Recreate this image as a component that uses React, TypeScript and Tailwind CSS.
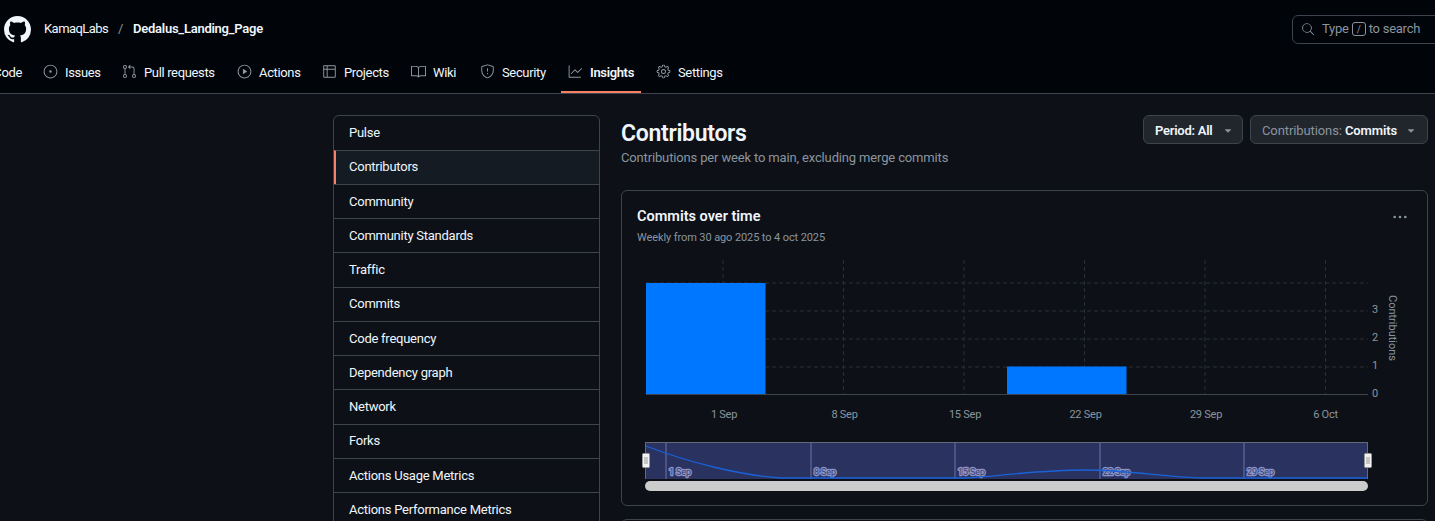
import { GoBook, GoGear, GoGitPullRequest, GoGraph, GoIssueOpened, GoKebabHorizontal, GoPlay, GoSearch, GoShield, GoTable, GoTriangleDown } from 'react-icons/go'

const navItems = [
  { label: 'Issues', icon: GoIssueOpened, w: 'w-[71px]' },
  { label: 'Pull requests', icon: GoGitPullRequest, w: 'w-[107px]' },
  { label: 'Actions', icon: GoPlay, w: 'w-[77px]' },
  { label: 'Projects', icon: GoTable, w: 'w-[81px]' },
  { label: 'Wiki', icon: GoBook, w: 'w-[61px]' },
  { label: 'Security', icon: GoShield, w: 'w-[80px]' },
  { label: 'Insights', icon: GoGraph, w: 'w-[80px]', active: true },
  { label: 'Settings', icon: GoGear, w: 'w-[83px]' },
]

const sideItems = ['Pulse', 'Contributors', 'Community', 'Community Standards', 'Traffic', 'Commits', 'Code frequency', 'Dependency graph', 'Network', 'Forks', 'Actions Usage Metrics', 'Actions Performance Metrics']

const vGrid = [723, 843.5, 964, 1084.5, 1205, 1325.5]
const xLabels = ['1 Sep', '8 Sep', '15 Sep', '22 Sep', '29 Sep', '6 Oct']
const navTicks = [
  { x: 666, label: '1 Sep' },
  { x: 811, label: '8 Sep' },
  { x: 955, label: '15 Sep' },
  { x: 1100, label: '22 Sep' },
  { x: 1244, label: '29 Sep' },
]

const GithubMark = () => {
  return (
    <svg viewBox="0 0 16 16" className="w-[27px] h-[27px]" fill="#f0f6fc">
      <path d="M8 0c4.42 0 8 3.58 8 8a8.013 8.013 0 0 1-5.45 7.59c-.4.08-.55-.17-.55-.38 0-.27.01-1.13.01-2.2 0-.75-.25-1.23-.54-1.48 1.78-.2 3.65-.88 3.65-3.95 0-.88-.31-1.59-.82-2.15.08-.2.36-1.02-.08-2.12 0 0-.67-.22-2.2.82-.64-.18-1.32-.27-2-.27-.68 0-1.36.09-2 .27-1.53-1.03-2.2-.82-2.2-.82-.44 1.1-.16 1.92-.08 2.12-.51.56-.82 1.28-.82 2.15 0 3.06 1.86 3.75 3.64 3.95-.23.2-.44.55-.51 1.07-.46.21-1.61.55-2.33-.66-.15-.24-.6-.83-1.23-.82-.67.01-.27.38.01.53.34.19.73.9.82 1.13.16.45.68 1.31 2.69.94 0 .67.01 1.3.01 1.49 0 .21-.15.45-.55.38A7.995 7.995 0 0 1 0 8c0-4.42 3.58-8 8-8Z" />
    </svg>
  )
}

const Chart = () => {
  return (
    <svg viewBox="640 255 770 240" className="block w-[770px] h-[240px] ml-[18px] mt-[9px]">
      {vGrid.map((x) => (
        <line key={x} x1={x} x2={x} y1="260" y2="394" stroke="#2a2f36" strokeDasharray="4 3" />
      ))}
      {[283, 311, 339, 367].map((y) => (
        <line key={y} x1="646" x2="1368" y1={y} y2={y} stroke="#2a2f36" strokeDasharray="4 3" />
      ))}
      <line x1="646" x2="1368" y1="394.5" y2="394.5" stroke="#3d444d" />
      <rect x="646" y="283" width="119.5" height="111" fill="#0077ff" />
      <rect x="1007" y="366.5" width="119.5" height="27.5" fill="#0077ff" />
      {vGrid.map((x, i) => (
        <text key={x} x={x + (i === 5 ? 0 : 1)} y="418" textAnchor="middle" fontSize="11" fill="#8b949e">{xLabels[i]}</text>
      ))}
      {['3', '2', '1', '0'].map((t, i) => (
        <text key={t} x="1375" y={313 + i * 28} textAnchor="middle" fontSize="11" fill="#8b949e">{t}</text>
      ))}
      <text transform="translate(1389 328) rotate(90)" textAnchor="middle" fontSize="11" letterSpacing="0" fill="#8b949e">Contributions</text>

      <rect x="645.5" y="442" width="722" height="37" fill="#2a3260" />
      <line x1="645" x2="1368" y1="442.5" y2="442.5" stroke="#666a78" />
      <line x1="645.5" x2="645.5" y1="442" y2="479" stroke="#666a78" />
      <line x1="1367.5" x2="1367.5" y1="442" y2="479" stroke="#666a78" />
      {navTicks.map((t) => (
        <g key={t.x}>
          <line x1={t.x} x2={t.x} y1="443" y2="479" stroke="#6b74a8" />
          <text x={t.x + 3} y="475" fontSize="9" letterSpacing="-0.1" fill="#3a4170" stroke="#8b93c8" strokeWidth="2.5" paintOrder="stroke" strokeLinejoin="round">{t.label}</text>
        </g>
      ))}
      <path d="M646 446 C 690 463 740 475 780 478 L 965 478 C 1000 476 1040 470 1085 470 C 1130 470 1170 478 1205 478 L 1367 478" fill="none" stroke="#1a62d8" strokeWidth="1.3" />
      <rect x="645" y="481" width="723" height="10" rx="5" fill="#cccccc" />
      {[642, 1364].map((x) => (
        <g key={x}>
          <rect x={x + 0.5} y="453.5" width="7" height="14" rx="1" fill="#f2f2f2" stroke="#999999" />
          <line x1={x + 3} x2={x + 3} y1="457" y2="464" stroke="#999999" />
          <line x1={x + 5} x2={x + 5} y1="457" y2="464" stroke="#999999" />
        </g>
      ))}
    </svg>
  )
}

const App = () => {
  return (
    <div className="w-[1435px] h-[521px] overflow-hidden bg-[#0d1117] text-[#f0f6fc] text-[13px] tracking-[-0.25px] font-['Roboto',sans-serif]">
      <header className="h-[94px] bg-[#010409] border-b border-[#3d444d] overflow-hidden">
        <div className="h-[58px] flex items-center pl-1">
          <GithubMark />
          <span className="ml-[13px] text-[#f0f6fc] w-[64px] tracking-[-0.55px]">KamaqLabs</span>
          <span className="ml-[10px] text-[#8b949e] w-[5px]">/</span>
          <span className="ml-[10px] font-semibold">Dedalus_Landing_Page</span>
          <div className="ml-auto -mr-[40px] w-[183px] h-[29px] flex items-center gap-[7px] pl-2 border border-[#3d444d] rounded-md text-[#8b949e]">
            <GoSearch className="w-[14px] h-[14px]" />
            <span className="flex items-center gap-[3px]">
              Type
              <kbd className="w-[14px] h-[14px] border border-[#8b949e] rounded-[3px] flex items-center justify-center text-[10px] font-['Roboto',sans-serif]">/</kbd>
              to search
            </span>
          </div>
        </div>
        <nav className="h-[35px] flex items-start -ml-[43px] gap-2 tracking-[-0.35px]">
          <div className="w-[71px] h-[35px] pt-[5px] flex justify-end pr-[6px]">Code</div>
          {navItems.map((item) => {
            const Icon = item.icon
            return (
              <div key={item.label} className={`${item.w} h-[35px] pt-[5px] pl-[7px] flex gap-[7px] shrink-0 border-b-2 ${item.active ? 'border-[#f78166] font-semibold' : 'border-transparent'}`}>
                <Icon className="w-[15px] h-[15px] mt-[1px] text-[#9198a1] shrink-0" />
                <span className="whitespace-nowrap">{item.label}</span>
              </div>
            )
          })}
        </nav>
      </header>
      <main className="flex pl-[333px] pt-[21px]">
        <aside className="w-[267px] h-[500px] shrink-0 border border-[#3d444d] rounded-md">
          {sideItems.map((item, i) => (
            <div key={item} className={`${i === 0 ? 'h-[33.5px]' : 'h-[34.25px]'} flex items-center px-[15px] ${i > 0 ? 'border-t border-[#3d444d]' : ''} ${i === 1 ? 'bg-[#151b23] border-l-2 border-l-[#f78166] pl-[13px]' : ''}`}>
              {item}
            </div>
          ))}
        </aside>
        <section className="ml-[21px] w-[807px] shrink-0">
          <div className="flex items-start justify-between h-[75px]">
            <div>
              <h1 className="text-[23px] leading-[38px] tracking-[-0.3px] font-semibold">Contributors</h1>
              <p className="-mt-[5px] tracking-[-0.15px] text-[#8b949e]">Contributions per week to main, excluding merge commits</p>
            </div>
            <div className="flex gap-[7px]">
              <button className="w-[100px] h-[29px] pt-[2px] pl-[11px] flex items-center gap-[10px] bg-[#21262d] border border-[#3d444d] rounded-md font-semibold">
                Period: All
                <GoTriangleDown className="w-3 h-3 text-[#8b949e]" />
              </button>
              <button className="w-[178px] h-[29px] pt-[2px] pl-[11px] flex items-center gap-[8px] bg-[#21262d] border border-[#3d444d] rounded-md text-[#8b949e] tracking-[-0.1px]">
                <span>Contributions: <b className="font-semibold text-[#f0f6fc]">Commits</b></span>
                <GoTriangleDown className="w-3 h-3 text-[#8b949e]" />
              </button>
            </div>
          </div>
          <div className="h-[316px] border border-[#3d444d] rounded-md pt-[16px]">
            <div className="flex justify-between pl-[15px] pr-[19px]">
              <div>
                <h2 className="text-[14.5px] leading-[20px] tracking-normal font-semibold">Commits over time</h2>
                <p className="mt-[3px] text-[11px] leading-[16px] tracking-[-0.1px] text-[#8b949e]">Weekly from 30 ago 2025 to 4 oct 2025</p>
              </div>
              <GoKebabHorizontal className="w-4 h-4 mt-[2px] text-[#8b949e]" />
            </div>
            <Chart />
          </div>
          <div className="h-[50px] mt-[13px] border border-[#3d444d] rounded-md" />
        </section>
      </main>
    </div>
  )
}

export default App
